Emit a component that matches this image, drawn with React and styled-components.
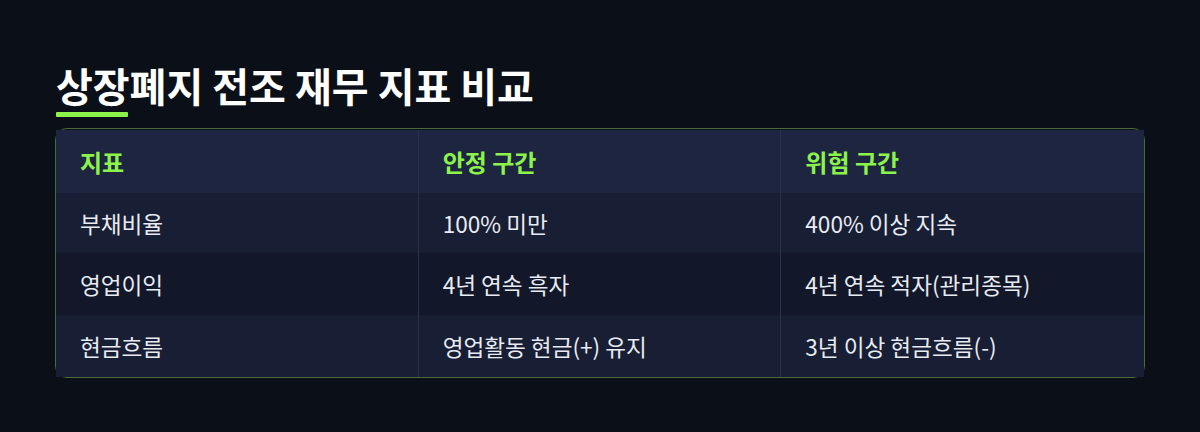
import React from "react";
import styled, { createGlobalStyle } from "styled-components";

const Global = createGlobalStyle`
  html, body { margin: 0; padding: 0; background: #0b0f18; }
  body { font-family: "Noto Sans CJK KR", "Noto Sans", sans-serif; }
`;

const Page = styled.div`
  width: 1200px;
  height: 432px;
  box-sizing: border-box;
  padding: 61px 55px 0 55px;
  background: #0b0f18;
`;

const Title = styled.h1`
  margin: 0 0 0 1px;
  font-size: 40px;
  font-weight: 700;
  line-height: 48px;
  color: #ffffff;
`;

const Accent = styled.div`
  width: 72px;
  height: 5px;
  margin: 3px 0 0 1px;
  background: #8cf34a;
  border-radius: 1px;
`;

const Frame = styled.div`
  margin-top: 11px;
  border: 1px solid #4b6a3c;
  border-radius: 12px;
`;

const Table = styled.div`
  display: grid;
  grid-template-columns: repeat(3, 1fr);
  margin-top: 1px;
`;

const Cell = styled.div`
  display: flex;
  align-items: center;
  height: ${(p) => p.$h}px;
  padding-left: 24px;
  background: ${(p) => p.$bg};
  border-right: ${(p) => (p.$last ? "none" : "1px solid #283149")};
  font-size: ${(p) => (p.$head ? "24px" : "22.6px")};
  font-weight: ${(p) => (p.$head ? 700 : 400)};
  color: ${(p) => (p.$head ? "#8cf34a" : "#e8ebf2")};
  white-space: nowrap;
`;

const head = ["지표", "안정 구간", "위험 구간"];
const rows = [
  ["부채비율", "100% 미만", "400% 이상 지속"],
  ["영업이익", "4년 연속 흑자", "4년 연속 적자(관리종목)"],
  ["현금흐름", "영업활동 현금(+) 유지", "3년 이상 현금흐름(-)"],
];
const rowBg = ["#181e33", "#121829", "#181e33"];
const rowH = [60, 62, 62];

export default function App() {
  return (
    <Page>
      <Global />
      <Title>상장폐지 전조 재무 지표 비교</Title>
      <Accent />
      <Frame>
        <Table>
          {head.map((h, i) => (
            <Cell key={h} $head $last={i === 2} $bg="#1e2540" $h={63}>
              {h}
            </Cell>
          ))}
          {rows.map((r, ri) =>
            r.map((c, ci) => (
              <Cell key={ri + "-" + ci} $last={ci === 2} $bg={rowBg[ri]} $h={rowH[ri]}>
                {c}
              </Cell>
            ))
          )}
        </Table>
      </Frame>
    </Page>
  );
}
